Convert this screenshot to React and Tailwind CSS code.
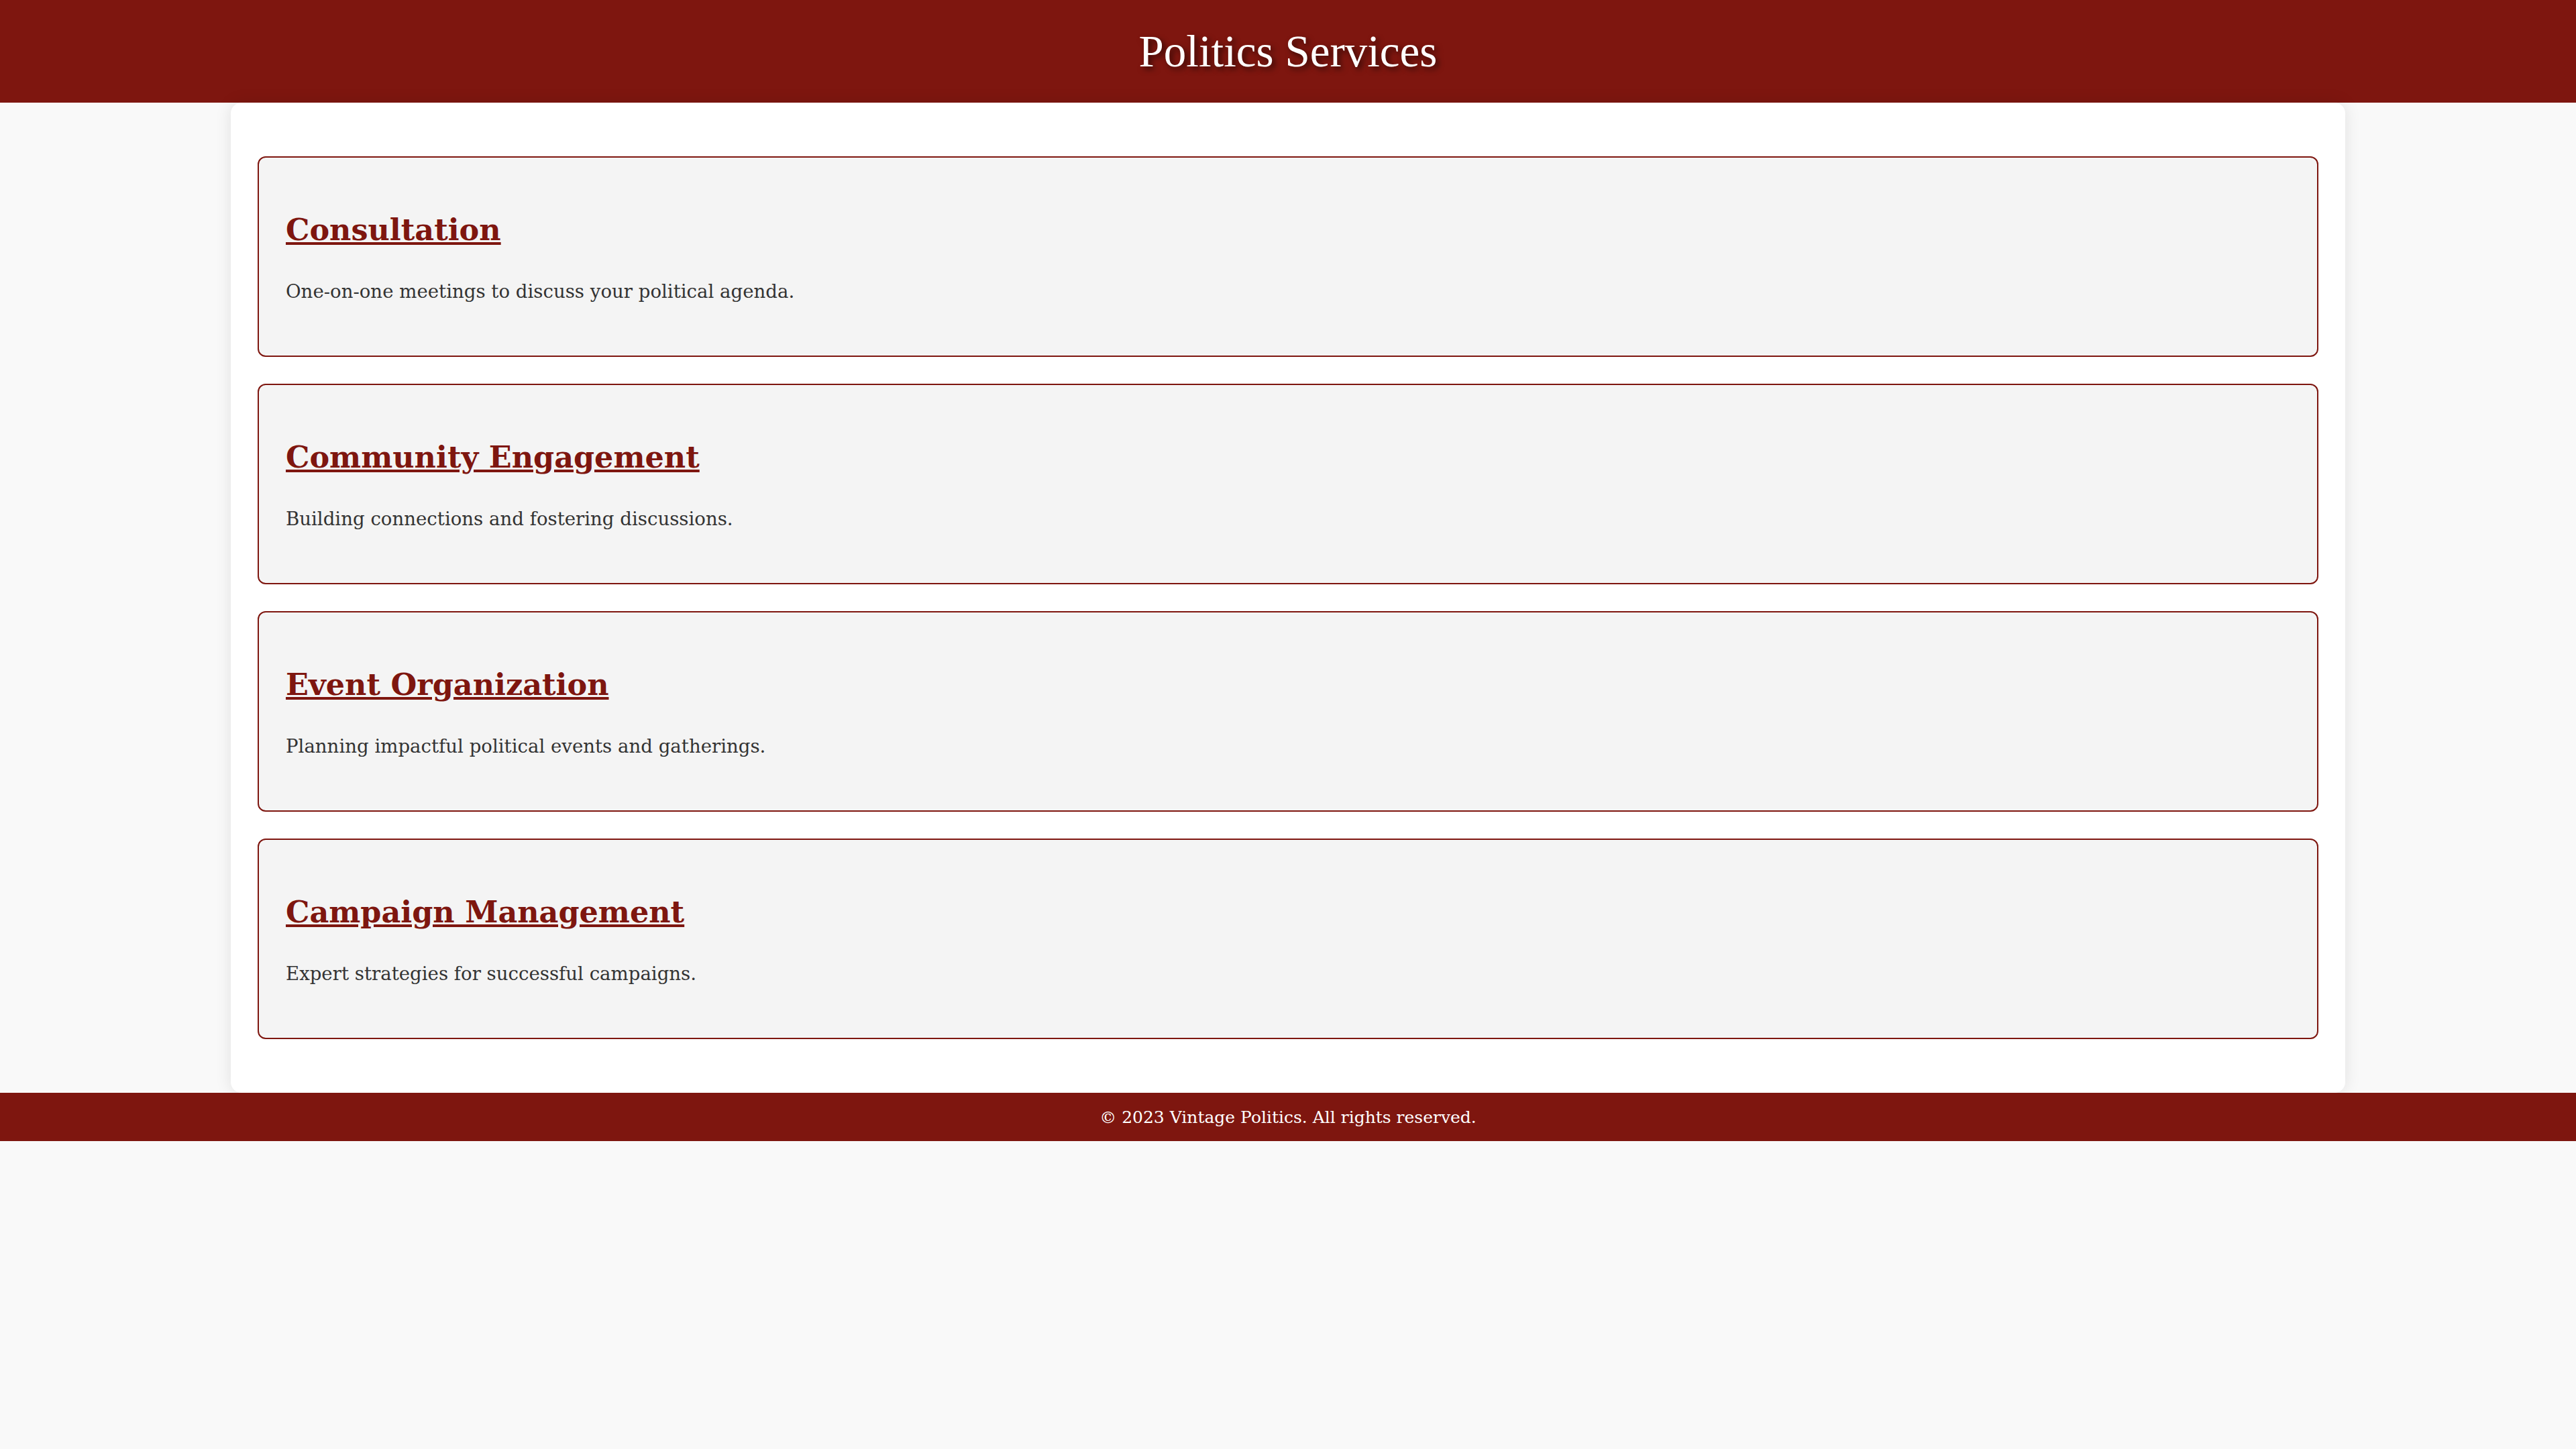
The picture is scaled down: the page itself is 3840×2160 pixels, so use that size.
export default function App() {
  const services = [
    { title: "Consultation", text: "One-on-one meetings to discuss your political agenda." },
    { title: "Community Engagement", text: "Building connections and fostering discussions." },
    { title: "Event Organization", text: "Planning impactful political events and gatherings." },
    { title: "Campaign Management", text: "Expert strategies for successful campaigns." },
  ];
  return (
    <div className="min-h-screen bg-[#f9f9f9] font-['DejaVu_Serif',serif]">
      <header className="h-[153px] bg-[#7e160f] flex items-center justify-center">
        <h1 className="font-['Liberation_Serif',serif] text-[67px] leading-none text-white [text-shadow:4px_4px_8px_rgba(0,0,0,0.6)]">
          Politics Services
        </h1>
      </header>
      <main className="mx-auto w-[3152px] bg-white rounded-[16px] shadow-[0_0_24px_rgba(0,0,0,0.1)] px-10 py-20 flex flex-col gap-10">
        {services.map((s) => (
          <section
            key={s.title}
            className="border-2 border-[#7e160f] rounded-[12px] bg-[#f4f4f4] px-10 pt-[80px] pb-[75px]"
          >
            <h2 className="text-[44.5px] leading-[54px] font-bold text-[#7e160f] underline">
              {s.title}
            </h2>
            <p className="mt-[46px] text-[27.6px] leading-[40px] text-[#333333]">{s.text}</p>
          </section>
        ))}
      </main>
      <footer className="h-[72px] bg-[#7e160f] flex items-center justify-center">
        <p className="text-[25px] leading-none text-white">© 2023 Vintage Politics. All rights reserved.</p>
      </footer>
    </div>
  );
}
